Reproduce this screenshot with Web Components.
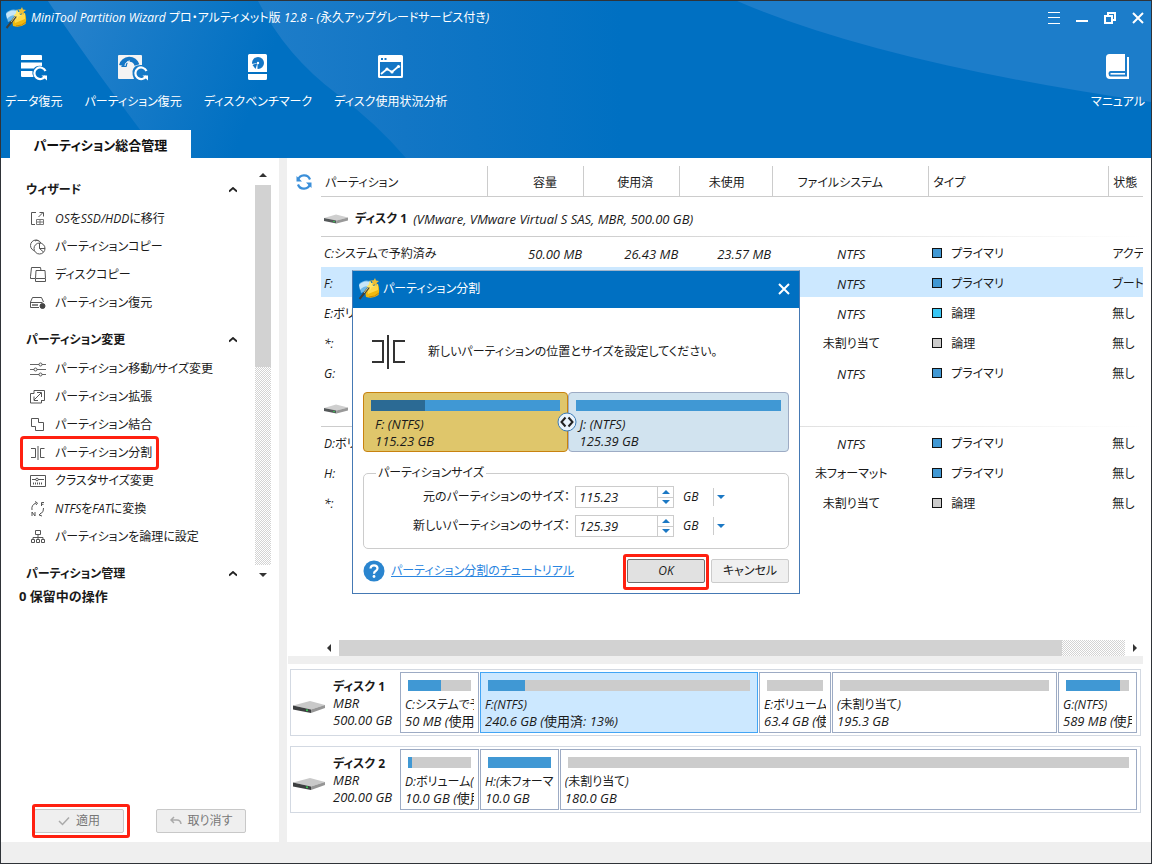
<!DOCTYPE html>
<html lang="ja">
<head>
<meta charset="utf-8">
<title>MiniTool Partition Wizard</title>
<style>
html, body { margin: 0; }
body {
  font-family: "Open Sans", "Noto Sans CJK JP", sans-serif;
  font-size: 12px; line-height: 16px; color: #1a1a1a;
  font-feature-settings: "palt"; font-synthesis: none;
  background: #fff;
}
</style>
</head>
<body>
<pw-app></pw-app>
<script>
const BASE = `*,:host{box-sizing:border-box} button,input,select{font:inherit;color:inherit;font-feature-settings:inherit}
  :host([hidden]){display:none}`;

function define(name, css, html, setup) {
  customElements.define(name, class extends HTMLElement {
    connectedCallback() {
      if (this.shadowRoot) return;
      const root = this.attachShadow({ mode: 'open' });
      root.innerHTML = `<style>${BASE}${css}</style>` + (typeof html === 'function' ? html(this) : html);
      if (setup) setup(this, root);
    }
  });
}

const line = body => `<g fill="none" stroke="#555" stroke-width="1">${body}</g>`;
const ICONS = {
  logo: [22, 22, `<path d="M1 6 Q6 1 12 3 L12 11 L3 15Z" fill="#6cb8ea"/><path d="M1 7Q5 2 12 4L11 8Q5 8 2 12Z" fill="#c7e6f8"/>
    <path d="M7 12 L20 6 Q22 12 20.500 17 Q15 21 8 19Z" fill="#f1b90e"/><path d="M9 11L20 6L20 12L10 16Z" fill="#ffd94a"/><path d="M11 19Q17 19 21 15" stroke="#c98609" fill="none"/>
    <path d="M1.500 21 L12 8" stroke="#40403a" stroke-width="2"/><path d="M6 15L12 7" stroke="#d8cc86" stroke-width="1"/>
    <path d="M12 2l1.300 3 3-1-1.500 3 2 2-3 .2-1.500 3-1-3-3-.5 2.300-2z" fill="#ffe66b"/><path d="M17 0l1 2.500 3 .5-2.300 2 .3 3-2.400-1.500-2.600 1 .8-3-2-2 3-.2z" fill="#eebf35"/>`],
  data: [27, 27, `<g fill="#fff"><path d="M2 1h19a1 1 0 0 1 1 1v4H1V2a1 1 0 0 1 1-1z"/><path d="M1 8.500h21v3.500q-6-1-8 2.500H1z"/><path d="M1 17h11.500q-.6 3.500 1 6H2a1 1 0 0 1-1-1z"/></g>
    <path d="M25.500 17a5.800 5.800 0 1 0-.2 5" fill="none" stroke="#fff" stroke-width="2.200"/><path d="M21.500 21.500h5.500v5z" fill="#fff"/>`],
  precover: [32, 27, `<path d="M2 1h22a1 1 0 0 1 1 1v9q-8-1-9.500 6-.5 4 1.500 8H2a1 1 0 0 1-1-1V2a1 1 0 0 1 1-1z" fill="#f3f3f3"/>
    <path d="M4.500 11.500A8 8 0 0 1 20 11" fill="none" stroke="#1476c5" stroke-width="5"/><path d="M4 13l5-6 3 4-3 2z" fill="#1476c5"/><circle cx="13" cy="11.500" r="3" fill="#f3f3f3"/><path d="M8 12a5 5 0 0 1 5-5" stroke="#fff" fill="none"/>
    <path d="M29.500 17a5.800 5.800 0 1 0-.2 5" fill="none" stroke="#fff" stroke-width="2.200"/><path d="M25.500 21.500H31v5z" fill="#fff"/>`],
  bench: [22, 27, `<path d="M2.500 0h16a1.500 1.500 0 0 1 1.500 1.500V18H1V1.500A1.500 1.500 0 0 1 2.500 0zM1 20h19v4.500a1.500 1.500 0 0 1-1.500 1.500h-16A1.500 1.500 0 0 1 1 24.500z" fill="#fff"/>
    <circle cx="11" cy="9" r="6" fill="#1476c5"/><path d="M4.500 15.500V10l6-1v6.500z" fill="#fff"/><path d="M5.500 11l5-2-2 6z" fill="#1476c5"/><circle cx="11" cy="9" r="1.200" fill="#fff"/>`],
  usage: [28, 26, `<path d="M2.500 1h22a1.500 1.500 0 0 1 1.500 1.500v20a1.500 1.500 0 0 1-1.500 1.500h-22A1.500 1.500 0 0 1 1 22.500v-20A1.500 1.500 0 0 1 2.500 1z" fill="#fff"/><path d="M3 8h21v14H3z" fill="#1476c5"/><path d="M4 4h2v2H4zM7.500 4h2v2h-2z" fill="#1476c5"/><path d="M4 20l6-5 5 3 7-6" fill="none" stroke="#fff" stroke-width="1.800"/><circle cx="10" cy="15" r="1.600" fill="#fff"/><circle cx="15" cy="18" r="1.600" fill="#fff"/><circle cx="21.500" cy="12.500" r="1.600" fill="#fff"/>`],
  manual: [24, 26, `<path d="M3.500 0H19V17H4.500Q2.500 17 2.500 19.500Q2.500 22 4.500 22.500H21V3h2V25H4Q0 25 0 21V3.500Q0 0 3.500 0z" fill="#fff"/><path d="M4.500 19.800H19" stroke="#fff" stroke-width="1.600"/>`],
  menu: [12, 12, `<path d="M0 .5h12M0 5.500h12M0 11.500h12" stroke="#fff"/>`],
  min: [12, 12, `<path d="M0 9h12" stroke="#fff" stroke-width="2"/>`],
  restore: [12, 12, `<path d="M1 4h7v7H1zM4 4V1h7v7H8" fill="none" stroke="#fff" stroke-width="2"/>`],
  close: [12, 12, `<path d="M1 1l10 10M11 1L1 11" stroke="#fff" stroke-width="2"/>`],
  migrate: [16, 16, line(`<path d="M6 1.500H1.500v12H5M8.500 6l4-4M9.500 1.500h4v4"/><path d="M6.500 8.500h7v5h-7zM10 8.500v5M6.500 11h7" stroke="#777"/>`)],
  pcopy: [16, 16, line(`<circle cx="6" cy="6.500" r="5.500"/><circle cx="9.500" cy="9.500" r="5.500" fill="#fff"/><path d="M9.500 4v5.500H15M9.500 9.500l4 3.500M5 2q2-1.500 3.500 0"/>`)],
  dcopy: [16, 16, line(`<path d="M5 11.500H.5V9.500L1.500.5h9l.5 3"/><path d="M5.500 14.500v-3l.5-8h9l.5 8v3zM6 11.500h9"/>`)],
  drecover: [16, 16, line(`<path d="M.5 12.500V7l2-4.500h9L13.500 7M.5 7.500h12M.5 12.500H9"/><path d="M2 10h6" stroke-width="2" stroke="#888"/><circle cx="12.500" cy="11" r="2.500" fill="#444" stroke="#444"/>`)],
  sliders: [16, 16, line(`<path d="M0 3.500h9M12 3.500h4M0 8.500h4M7 8.500h9M0 13.500h9M12 13.500h4" stroke="#666"/><circle cx="10.500" cy="3.500" r="1.500"/><circle cx="5.500" cy="8.500" r="1.500"/><circle cx="10.500" cy="13.500" r="1.500"/>`)],
  extend: [16, 16, line(`<path d="M4 4.500V1.500h10.500v10h-3M4 4.500H.5v9.500h11v-3"/><path d="M4 11l7-7M7 3.500h4.500V8M4 7.500v4h4"/>`)],
  merge: [16, 16, line(`<path d="M1.500 1.500h7v4h5v8h-8v-4h-4z"/>`)],
  split: [16, 16, line(`<path d="M1 3.500h4.500v9H1M8 1v14M14.500 3.500h-4v9h4"/>`)],
  cluster: [16, 16, line(`<path d="M.5 2.500h15v11H.5zM2 6.500h4M8 6.500h6"/><circle cx="7" cy="6.500" r="1.300"/><path d="M3 10.500h10" stroke-dasharray="1 1" stroke-width="2"/>`)],
  convert: [16, 16, line(`<path d="M2 9Q1 4 6 2M5 .5L7.500 2 6 4M13.500 7q1 4-4 6.500M11 12l-2 2 3 1M11.500 5V1.500H14M11.500 3.300h2M2 15v-4l3 4v-4"/>`)],
  tree: [16, 16, line(`<path d="M5.500 1.500h5v4h-5zM8 6v4M3 10V8.500h10V10M1.500 10.500h3v3h-3zM6.500 10.500h3v3h-3zM11.500 10.500h3v3h-3z"/>`)],
  up: [8, 6, `<path d="M0 4.500L4 1l4 3.500" fill="none" stroke="#222" stroke-width="1.800"/>`],
  refresh: [16, 16, `<g fill="none" stroke="#3b8fd9" stroke-width="2.200"><path d="M2 6A6.300 6.300 0 0 1 14 5.500M14 10A6.300 6.300 0 0 1 2 10.500"/></g><path d="M.5 2v5.500H6zM15.500 14V8.500H10z" fill="#3b8fd9"/>`],
  disk: [34, 15, `<path d="M1 6.500L18 2l15 4-14 4.500z" fill="#c9c9c9"/><path d="M1 6.500l18 4V14L1 10.500z" fill="#3d3f40"/><path d="M19 10.500l14-4.500v3L19 14z" fill="#969696"/><circle cx="15" cy="11.300" r="1" fill="#3bd157"/>`],
  disksm: [26, 11, `<path d="M1 5L13 1.500 25 4.500 13.500 7.500z" fill="#cfcfcf"/><path d="M1 5l12.500 2.500v3L1 8z" fill="#55595a"/><path d="M13.500 7.500l11.500-3v3l-11.500 3z" fill="#999"/><circle cx="11" cy="8.600" r=".8" fill="#3bd157"/>`],
  bigsplit: [33, 36, `<path d="M0 7h11v21H0M16 1v34M33 7H22v21h11" fill="none" stroke="#333" stroke-width="2"/>`],
  help: [22, 22, `<circle cx="11" cy="11" r="10.500" fill="#2a85cf"/><path d="M7.500 8.500q.2-3.200 3.500-3.200t3.500 2.900q0 1.700-1.800 2.800-1.700 1-1.700 2.700" fill="none" stroke="#fff" stroke-width="2.200"/><circle cx="11" cy="16.500" r="1.400" fill="#fff"/>`],
  handle: [20, 20, `<circle cx="10" cy="10" r="9" fill="#e9f3fb" stroke="#3c7cb8"/><path d="M8.500 5.500L4.500 10l4 4.500M11.500 5.500l4 4.500-4 4.500" fill="none" stroke="#222" stroke-width="2"/>`],
  check: [12, 10, `<path d="M1 5l3.500 3.500L11 1.500" fill="none" stroke="#aaa" stroke-width="1.500"/>`],
  undo: [12, 10, `<path d="M4 1L1 4l3 3M1.500 4H7q3.500 0 4 4" fill="none" stroke="#aaa" stroke-width="1.500"/>`],
  tu: [8, 4, `<path d="M0 4l4-4 4 4z" fill="#1b78c4"/>`],
  td: [8, 4, `<path d="M0 0l4 4 4-4z" fill="#1b78c4"/>`],
  au: [8, 4, `<path d="M0 4l4-4 4 4z" fill="#333"/>`],
  ad: [8, 4, `<path d="M0 0l4 4 4-4z" fill="#333"/>`],
  al: [4, 8, `<path d="M4 0v8L0 4z" fill="#333"/>`],
  ar: [4, 8, `<path d="M0 0v8l4-4z" fill="#333"/>`]
};
define('pw-icon', ':host{display:block;flex:none} svg{display:block}', el => {
  const [w, h, body] = ICONS[el.getAttribute('name')];
  return `<svg width="${w}" height="${h}" viewBox="0 0 ${w} ${h}" aria-hidden="true">${body}</svg>`;
});

/* ---------- header ---------- */
define('pw-tool', `
  :host{display:block}
  button{display:flex;flex-direction:column;align-items:center;gap:10px;border:0;background:none;padding:0;color:#fff;white-space:nowrap}
  .ic{height:34px;display:flex;align-items:center}`,
  el => `<button type="button"><span class="ic"><pw-icon name="${el.getAttribute('icon')}"></pw-icon></span><span><slot></slot></span></button>`);

define('pw-header', `
  :host{display:grid;grid-template-rows:36px 93px 28px;position:relative;background:#0070c2;color:#fff}
  .bg{position:absolute;inset:0;width:100%;height:100%}
  .title,.tools,.tabs{position:relative;display:flex}
  .title{align-items:center;padding:0 7px 2px 4px;gap:4px;font-style:italic}
  h1{font-size:12px;font-weight:400;margin:0;flex:1;white-space:nowrap}
  .win{display:flex;gap:16px}
  .win button{border:0;background:none;padding:0}
  .tools{gap:22px;padding:13px 6px 0 4px;align-items:flex-start}
  .end{margin-left:auto}
  .tabs button{margin-left:9px;width:181px;border:0;background:#fff;color:#111;font-weight:700;font-size:13px;padding:2px 0 0}`,
  `<svg class="bg" viewBox="0 0 1150 157" preserveAspectRatio="none" aria-hidden="true">
    <defs><linearGradient id="a" gradientUnits="userSpaceOnUse" x1="60" y1="40" x2="250" y2="110"><stop offset="0" stop-color="#2581cb"/><stop offset="1" stop-color="#0070c2"/></linearGradient>
    <linearGradient id="b" gradientUnits="userSpaceOnUse" x1="260" y1="0" x2="620" y2="0"><stop offset="0" stop-color="#1e7dc9"/><stop offset=".4" stop-color="#1276c5"/><stop offset="1" stop-color="#0070c2"/></linearGradient></defs>
    <path d="M47 0Q80 50 140 130L160 157H405Q290 70 257 0z" fill="url(#a)"/>
    <path d="M257 0Q285 55 336 93Q375 122 405 157H700V0z" fill="url(#b)"/>
    <path d="M736 0Q880 62 1150 101V0z" fill="#1c7dca"/></svg>
  <div class="title"><pw-icon name="logo"></pw-icon><h1>MiniTool Partition Wizard プロ・アルティメット版 12.8 - (永久アップグレードサービス付き)</h1>
    <div class="win"><button aria-label="メニュー"><pw-icon name="menu"></pw-icon></button><button aria-label="最小化"><pw-icon name="min"></pw-icon></button><button aria-label="元に戻す"><pw-icon name="restore"></pw-icon></button><button aria-label="閉じる"><pw-icon name="close"></pw-icon></button></div></div>
  <div class="tools"><pw-tool icon="data">データ復元</pw-tool><pw-tool icon="precover">パーティション復元</pw-tool><pw-tool icon="bench">ディスクベンチマーク</pw-tool><pw-tool icon="usage">ディスク使用状況分析</pw-tool><pw-tool class="end" icon="manual">マニュアル</pw-tool></div>
  <div class="tabs"><button type="button">パーティション総合管理</button></div>`);

/* ---------- sidebar ---------- */
define('pw-item', `
  :host{display:block}
  button{position:relative;display:flex;align-items:center;gap:9px;height:28px;padding:0;border:0;background:none;font-style:italic;white-space:nowrap}
  :host([marked]) button::after{content:"";position:absolute;inset:-3px -7px -3px -10px;border:3px solid #ff2010;border-radius:4px}`,
  el => `<button type="button"><pw-icon name="${el.getAttribute('icon')}"></pw-icon><span><slot></slot></span></button>`);

define('pw-group', `
  :host{display:block;margin-bottom:8px}
  h2{display:flex;justify-content:space-between;align-items:center;margin:0;height:30px;padding:0 18px 0 0;font-size:12px;font-weight:700}
  .items{padding-left:4px}`,
  el => `<h2>${el.getAttribute('label')}<pw-icon name="up"></pw-icon></h2><div class="items"><slot></slot></div>`);

define('pw-sidebar', `
  :host{display:flex;flex-direction:column;position:relative}
  .scroll{display:flex}
  nav{flex:1;padding:17px 0 0 25px;height:429px;overflow:hidden;min-width:0}
  .bar{width:16px;margin:15px 8px 0 0;display:flex;flex-direction:column;align-items:center}
  .bar .track{width:16px;height:380px;margin:8px 0;background:repeating-conic-gradient(#d3d3d3 0 25%,#fff 0 50%) 0 0/2px 2px}
  .thumb{height:182px;background:#d2d2d2}
  .pending{margin:0 0 0 18px;font-size:13px;font-weight:700;line-height:18px}
  .actions{margin-top:auto;display:flex;gap:32px;padding:0 0 9px 33px}
  .actions button{position:relative;width:90px;height:24px;border:1px solid #c8c8c8;border-radius:2px;background:#efefef;color:#777;display:flex;align-items:center;justify-content:center;gap:6px;padding:0}
  .marked::after{content:"";position:absolute;inset:-6px -7px -6px -3px;border:3px solid #ff2010;border-radius:3px}`,
  `<div class="scroll"><nav>
    <pw-group label="ウィザード"><pw-item icon="migrate">OSをSSD/HDDに移行</pw-item><pw-item icon="pcopy">パーティションコピー</pw-item><pw-item icon="dcopy">ディスクコピー</pw-item><pw-item icon="drecover">パーティション復元</pw-item></pw-group>
    <pw-group label="パーティション変更"><pw-item icon="sliders">パーティション移動/サイズ変更</pw-item><pw-item icon="extend">パーティション拡張</pw-item><pw-item icon="merge">パーティション結合</pw-item><pw-item icon="split" marked>パーティション分割</pw-item><pw-item icon="cluster">クラスタサイズ変更</pw-item><pw-item icon="convert">NTFSをFATに変換</pw-item><pw-item icon="tree">パーティションを論理に設定</pw-item></pw-group>
    <pw-group label="パーティション管理"></pw-group></nav>
    <div class="bar"><pw-icon name="au"></pw-icon><div class="track"><div class="thumb"></div></div><pw-icon name="ad"></pw-icon></div></div>
  <p class="pending">0 保留中の操作</p>
  <div class="actions"><button type="button" class="marked"><pw-icon name="check"></pw-icon>適用</button><button type="button"><pw-icon name="undo"></pw-icon>取り消す</button></div>`);

/* ---------- partition list ---------- */
const ROWS = [
  { disk: 'ディスク 1', info: '(VMware, VMware Virtual S SAS, MBR, 500.00 GB)' },
  ['C:システムで予約済み', '50.00 MB', '26.43 MB', '23.57 MB', 'NTFS', 'p', 'アクティブ'],
  ['F:', '', '', '', 'NTFS', 'p', 'ブート'],
  ['E:ボリ', '', '', '', 'NTFS', 'l', '無し'],
  ['*:', '', '', '', '未割り当て', 'u', '無し'],
  ['G:', '', '', '', 'NTFS', 'p', '無し'],
  { disk: '', info: '' },
  ['D:ボリ', '', '', '', 'NTFS', 'p', '無し'],
  ['H:', '', '', '', '未フォーマット', 'p', '無し'],
  ['*:', '', '', '', '未割り当て', 'u', '無し']
];
const TYPES = { p: ['#4098d4', 'プライマリ'], l: ['#38c6f4', '論理'], u: ['#ccc', '論理'] };
define('pw-partition-table', `
  :host{display:grid;grid-template-columns:34px minmax(0,1fr);padding-right:8px}
  .re{border:0;background:none;padding:16px 0 0 9px;align-self:start}
  table{width:100%;border-collapse:separate;border-spacing:0;table-layout:fixed;font-style:italic}
  th{height:39px;padding:12px 0 0;font-weight:400;vertical-align:middle;border-bottom:1px solid #ccc;
     background:linear-gradient(#ccc,#ccc) right 8px/1px 32px no-repeat}
  th:last-child{background:none}
  th:first-child,th:nth-child(6),th:last-child{text-align:left;padding-left:4px}
  th:nth-child(2){padding-left:18px}
  th:nth-child(3){padding-left:6px}
  th:nth-child(5){padding-right:22px}
  td{height:30px;padding:3px 3px 0;white-space:nowrap;overflow:hidden}
  td:nth-child(n+2):nth-child(-n+4){text-align:right;padding-right:2px}
  td:nth-child(5){text-align:center}
  td.w{font-size:13px}
  tr.sel td{background:#cce8ff}
  tr.disk td{text-align:left;height:40px;padding:3px 2px 0;background:linear-gradient(90deg,#ccc 30%,#fff) bottom/100% 1px no-repeat}
  .d{display:flex;align-items:center;gap:6px} .d b{font-style:normal}
  .d span{font-size:13px}
  i{display:inline-block;width:10px;height:10px;border:1px solid #111;margin-right:9px}`,
  () => `<button class="re" type="button" aria-label="更新"><pw-icon name="refresh"></pw-icon></button><table>
   <colgroup><col><col style="width:11.7%"><col style="width:11.7%"><col style="width:11.3%"><col style="width:19%"><col style="width:21.9%"><col style="width:4.1%"></colgroup>
   <thead><tr>${['パーティション', '容量', '使用済', '未使用', 'ファイルシステム', 'タイプ', '状態'].map(t => `<th scope="col">${t}</th>`).join('')}</tr></thead>
   <tbody>${ROWS.map((r, n) => Array.isArray(r)
     ? `<tr${n === 2 ? ' class="sel"' : ''}>${r.map((c, i) => i === 5 ? `<td><i style="background:${TYPES[c][0]}"></i>${TYPES[c][1]}</td>` : `<td${i && /^[\x20-\x7e]+$/.test(c) ? ' class="w"' : ''}>${c}</td>`).join('')}</tr>`
     : `<tr class="disk"><td colspan="7"><div class="d"><pw-icon name="disksm"></pw-icon><b>${r.disk}</b><span>${r.info}</span></div></td></tr>`).join('')}</tbody></table>`);

/* ---------- disk map ---------- */
define('pw-part', `
  :host{display:block;height:61px;border:1px solid #9dabc4;padding:7px 4px 0;overflow:hidden;min-width:0;white-space:nowrap;font-style:italic;line-height:17px;background:#fff}
  :host([selected]){background:#cce8ff;border-color:#42a5f5}
  .u{height:11px;margin:0 3px 5px;background:#ccc} .u div{height:11px;background:#4098d4}
  .t{overflow:hidden}
  .s{font-size:13px}`,
  el => `<div class="u"><div style="width:${el.getAttribute('used')}%"></div></div><div class="t">${el.getAttribute('name')}</div><div class="t s">${el.getAttribute('size')}</div>`,
  el => { el.style.flex = `${el.getAttribute('grow')} 1 0`; });

define('pw-disk', `
  :host{display:flex;border:1px solid #d3d9e2;height:67px;padding:2px 3px 0 0;gap:1px}
  .info{flex:0 0 108px;display:grid;grid-template-columns:34px auto;column-gap:7px;align-content:start;align-items:center;font-style:italic;font-size:13px;line-height:17px;padding:6px 0 0 1px;white-space:nowrap}
  b{font-size:12px;font-style:normal}
  pw-icon{grid-row:1/4;padding-top:5px}
  .info span,b{grid-column:2}`,
  el => `<div class="info"><pw-icon name="disk"></pw-icon><b>${el.getAttribute('label')}</b><span>MBR</span><span>${el.getAttribute('size')}</span></div><slot></slot>`);

define('pw-hscroll', `
  :host{display:flex;align-items:center;gap:8px;padding:0 14px 0 40px;height:16px}
  .track{flex:1;height:16px;background:repeating-conic-gradient(#d3d3d3 0 25%,#fff 0 50%) 0 0/2px 2px}
  .thumb{width:92%;height:16px;background:#d2d2d2}`,
  `<pw-icon name="al"></pw-icon><div class="track"><div class="thumb"></div></div><pw-icon name="ar"></pw-icon>`);

/* ---------- dialog ---------- */
define('pw-size-field', `
  :host{display:grid;grid-template-columns:1fr 99px 60px;align-items:center;height:29px;padding-right:44px}
  label{text-align:right;padding-right:5px;white-space:nowrap}
  .num{display:grid;grid-template-columns:1fr 16px;border:1px solid #ccc;height:22px}
  input{border:0;padding:0 3px;min-width:0;width:100%;height:20px;font-style:italic;font-size:13px;background:#fff;outline:0}
  .sp{display:grid;grid-template-rows:10px 10px;border-left:1px solid #ccc}
  .sp button{border:0;background:none;padding:0;display:grid;place-items:center}
  .sp button+button{border-top:1px solid #ccc}
  .unit{display:grid;grid-template-columns:37px 12px;align-items:center;padding-left:6px;height:22px;background:linear-gradient(#ccc,#ccc) 39px 2px/1px 18px no-repeat}
  select{grid-area:1/1/2/3;appearance:none;border:0;background:none;padding:0 0 0 3px;font-style:italic;width:44px;height:20px}
  .unit pw-icon{grid-area:1/2/2/3;pointer-events:none}`,
  el => `<label for="n">${el.getAttribute('label')}：</label><div class="num"><input id="n" type="text" value="${el.getAttribute('value')}"><div class="sp"><button type="button" aria-label="増やす"><pw-icon name="tu"></pw-icon></button><button type="button" aria-label="減らす"><pw-icon name="td"></pw-icon></button></div></div>
   <div class="unit"><select aria-label="単位"><option>GB</option></select><pw-icon name="td"></pw-icon></div>`);

define('pw-dialog', `
  :host{display:block;position:absolute;inset:0;margin:auto;width:448px;height:fit-content;background:#fff;border:1px solid #4579b4;border-top-color:#9fb5cc}
  header{display:flex;align-items:center;gap:3px;height:37px;padding:0 9px 2px 5px;background:#0070c2;color:#fff}
  h2{font-size:12px;font-weight:400;margin:0;flex:1}
  header button{border:0;background:none;padding:0}
  .body{padding:26px 10px 10px}
  .intro{display:flex;align-items:center;gap:23px;padding-left:9px;height:36px}
  .intro p{margin:0}
  .split{position:relative;display:flex;margin-top:22px;font-style:italic;font-size:13px;line-height:17px}
  .split>div{height:60px;border:1px solid #c8820f;border-radius:4px;background:#dfc66b;padding:7px 7px 0;flex:189 1 0}
  .split>div+div{border-color:#9dabc4;background:#d1e3ef;flex:206 1 0}
  .split span{display:block;padding-left:4px}
  .bar{height:11px;background:#4098d4;margin-bottom:5px}
  .bar div{height:11px;width:28.500%;background:#2b6a94}
  .split>pw-icon{position:absolute;left:48%;top:50%;transform:translate(-50%,-50%)}
  fieldset{margin:13px 0 0;border:1px solid #ccc;border-radius:5px;padding:1px 10px 8px;height:84px;min-width:0}
  legend{padding:0 2px;margin-left:2px}
  footer{display:flex;align-items:center;gap:6px;margin-top:10px}
  a{color:#2a85e0;margin-right:auto}
  footer button{position:relative;width:78px;height:24px;border:1px solid #ccc;border-radius:2px;background:#f0f0f0;padding:0}
  .ok{border-color:#707070;background:#e1e1e1;font-style:italic}
  .ok::after{content:"";position:absolute;inset:-6px -5px -8px -5px;border:3px solid #ff2010;border-radius:3px}`,
  `<div role="dialog" aria-labelledby="t"><header><pw-icon name="logo"></pw-icon><h2 id="t">パーティション分割</h2><button type="button" aria-label="閉じる"><pw-icon name="close"></pw-icon></button></header>
  <div class="body"><div class="intro"><pw-icon name="bigsplit"></pw-icon><p>新しいパーティションの位置とサイズを設定してください。</p></div>
  <div class="split"><div><div class="bar"><div></div></div><span>F: (NTFS)</span><span>115.23 GB</span></div><div><div class="bar"></div><span>J: (NTFS)</span><span>125.39 GB</span></div><pw-icon name="handle"></pw-icon></div>
  <fieldset><legend>パーティションサイズ</legend><pw-size-field label="元のパーティションのサイズ" value="115.23"></pw-size-field><pw-size-field label="新しいパーティションのサイズ" value="125.39"></pw-size-field></fieldset>
  <footer><pw-icon name="help"></pw-icon><a href="#tutorial">パーティション分割のチュートリアル</a><button type="button" class="ok">OK</button><button type="button">キャンセル</button></footer></div></div>`);

/* ---------- application frame ---------- */
define('pw-app', `
  :host{display:grid;grid-template-rows:157px 1fr 21px;min-height:100vh;border:1px solid #2f3338;position:relative;background:#fff}
  .main{display:grid;grid-template-columns:278px 8px minmax(0,1fr);min-height:0}
  .div{background:#efefef}
  .right{display:flex;flex-direction:column;min-width:0}
  pw-hscroll{margin-top:auto}
  .sep{height:8px;margin:0 8px 0 1px;background:#efefef}
  .maps{display:grid;gap:10px;padding:5px 10px 29px 3px}
  footer{background:#efefef}`,
  `<pw-header></pw-header><div class="main"><pw-sidebar></pw-sidebar><div class="div"></div><div class="right">
  <pw-partition-table></pw-partition-table><pw-hscroll></pw-hscroll><div class="sep"></div>
  <div class="maps"><pw-disk label="ディスク 1" size="500.00 GB">
    <pw-part grow="69" used="52" name="C:システムで予" size="50 MB (使用"></pw-part><pw-part selected grow="268" used="14" name="F:(NTFS)" size="240.6 GB (使用済: 13%)"></pw-part><pw-part grow="62" used="0" name="E:ボリューム(" size="63.4 GB (使"></pw-part><pw-part grow="215" used="0" name="(未割り当て)" size="195.3 GB"></pw-part><pw-part grow="69" used="86" name="G:(NTFS)" size="589 MB (使用"></pw-part></pw-disk>
  <pw-disk label="ディスク 2" size="200.00 GB"><pw-part grow="69" used="6" name="D:ボリューム(N" size="10.0 GB (使用"></pw-part><pw-part grow="69" used="100" name="H:(未フォーマ" size="10.0 GB"></pw-part><pw-part grow="568" used="0" name="(未割り当て)" size="180.0 GB"></pw-part></pw-disk></div></div></div>
  <footer></footer><pw-dialog></pw-dialog>`);
</script>
</body>
</html>
